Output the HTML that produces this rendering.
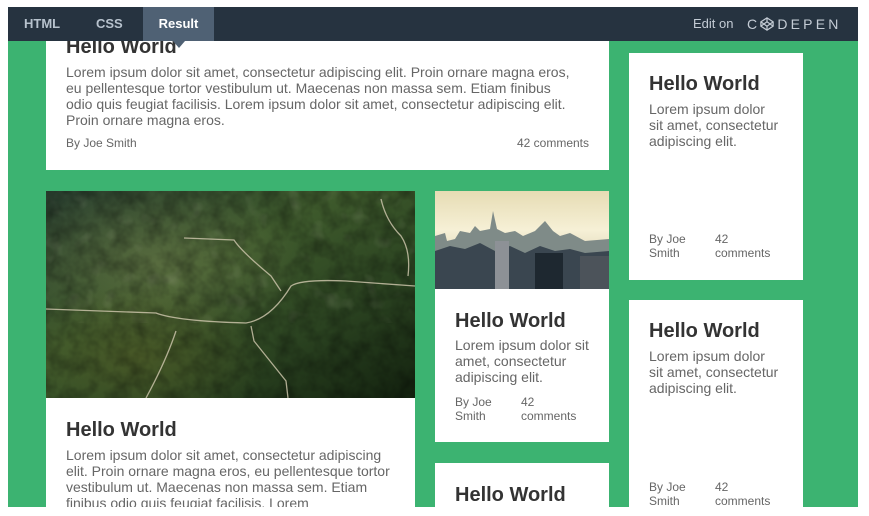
<!DOCTYPE html>
<html><head><meta charset="utf-8"><style>
*{margin:0;padding:0;box-sizing:border-box}
body{width:869px;height:516px;background:#fff;position:relative;overflow:hidden;font-family:"Liberation Sans",Arial,sans-serif}
.green{position:absolute;left:8px;top:7px;width:850px;height:500px;background:#3cb371;overflow:hidden}
.bar{position:absolute;left:8px;top:7px;width:850px;height:34px;background:#263340;z-index:5}
.tab{position:absolute;top:0;height:34px;line-height:33px;color:#b7c2cd;font-size:13px;font-weight:bold}
.card{position:absolute;background:#fff;overflow:hidden}
.t{position:absolute;font-size:20px;font-weight:bold;color:#333;white-space:nowrap}
.p{position:absolute;font-size:14px;line-height:16px;color:#666}
.s{position:absolute;font-size:12px;line-height:14px;color:#666}
</style></head><body>
<div class="green">
 <div class="card" style="left:38px;top:0;width:563px;height:163px">
  <div class="t" style="left:20px;top:29px">Hello World</div>
  <div class="p" style="left:20px;top:57px;width:508px">Lorem ipsum dolor sit amet, consectetur adipiscing elit. Proin ornare magna eros, eu pellentesque tortor vestibulum ut. Maecenas non massa sem. Etiam finibus odio quis feugiat facilisis. Lorem ipsum dolor sit amet, consectetur adipiscing elit. Proin ornare magna eros.</div>
  <div class="s" style="left:20px;top:129px">By Joe Smith</div>
  <div class="s" style="right:20px;top:129px">42 comments</div>
 </div>
 <div class="card" style="left:621px;top:46px;width:174px;height:227px">
  <div class="t" style="left:20px;top:20px">Hello World</div>
  <div class="p" style="left:20px;top:48px;width:132px">Lorem ipsum dolor sit amet, consectetur adipiscing elit.</div>
  <div class="s" style="left:20px;top:179px">By Joe<br>Smith</div>
  <div class="s" style="left:86px;top:179px">42<br>comments</div>
 </div>
 <div class="card" style="left:38px;top:184px;width:369px;height:330px">
  <svg width="369" height="207" style="position:absolute;left:0;top:0" viewBox="0 0 369 207">
   <defs><linearGradient id="g1" x1="0" y1="0" x2="1" y2="1"><stop offset="0" stop-color="#2a3f30"/><stop offset=".4" stop-color="#3e5a2c"/><stop offset=".7" stop-color="#2a4220"/><stop offset="1" stop-color="#13220f"/></linearGradient>
   <radialGradient id="g2" cx=".3" cy=".35" r=".4"><stop offset="0" stop-color="#6b7a4a" stop-opacity=".6"/><stop offset="1" stop-color="#6b7a4a" stop-opacity="0"/></radialGradient>
   <radialGradient id="g3" cx=".25" cy=".8" r=".35"><stop offset="0" stop-color="#4e5a26" stop-opacity=".7"/><stop offset="1" stop-color="#4e5a26" stop-opacity="0"/></radialGradient>
   <filter id="n"><feTurbulence type="fractalNoise" baseFrequency=".06" numOctaves="3" seed="3"/><feColorMatrix values="0 0 0 0 0  0 0 0 0 0  0 0 0 0 0  0 0 0 .6 -.2"/></filter>
   <filter id="n2"><feTurbulence type="fractalNoise" baseFrequency=".05" numOctaves="2" seed="8"/><feColorMatrix values="0 0 0 0 .6  0 0 0 0 .6  0 0 0 0 .45  0 0 0 .5 -.3"/></filter></defs>
   <rect width="369" height="207" fill="url(#g1)"/>
   <rect width="369" height="207" fill="url(#g2)"/>
   <rect width="369" height="207" fill="url(#g3)"/>
   <rect width="369" height="207" filter="url(#n)"/>
   <rect width="369" height="120" filter="url(#n2)"/>
   <g fill="none" stroke="#c9c2a8" stroke-width="1.3" opacity=".85">
    <path d="M0 118 L110 122 Q130 130 200 132 Q225 128 245 95 Q255 88 300 90 L369 95"/>
    <path d="M138 47 L188 49 Q195 60 225 85 L235 100"/>
    <path d="M205 135 L208 150 Q220 165 240 190 L242 207"/>
    <path d="M335 8 Q340 30 355 45 Q365 60 362 85"/>
    <path d="M130 140 Q120 170 100 207"/>
   </g>
  </svg>
  <div class="t" style="left:20px;top:228px">Hello World</div>
  <div class="p" style="left:20px;top:256px;width:328px">Lorem ipsum dolor sit amet, consectetur adipiscing elit. Proin ornare magna eros, eu pellentesque tortor vestibulum ut. Maecenas non massa sem. Etiam finibus odio quis feugiat facilisis. Lorem</div>
 </div>
 <div class="card" style="left:427px;top:184px;width:174px;height:251px">
  <svg width="174" height="98" style="position:absolute;left:0;top:0" viewBox="0 0 174 98">
   <defs><linearGradient id="sk" x1="0" y1="0" x2="0" y2="1"><stop offset="0" stop-color="#e6dcb4"/><stop offset=".4" stop-color="#f6f0d6"/><stop offset="1" stop-color="#c9bfa0"/></linearGradient></defs>
   <rect width="174" height="98" fill="url(#sk)"/>
   <path d="M0 45 L10 42 L12 50 L20 48 L25 40 L35 42 L40 35 L45 40 L55 38 L58 20 L62 38 L70 42 L80 40 L88 45 L100 40 L110 30 L118 40 L125 45 L135 42 L150 50 L174 48 L174 98 L0 98Z" fill="#7f8b88"/>
   <path d="M0 60 L15 55 L30 58 L45 52 L60 60 L75 55 L90 62 L105 55 L120 60 L135 58 L150 62 L174 60 L174 98 L0 98Z" fill="#3a4650"/>
   <rect x="100" y="62" width="28" height="36" fill="#1e2830"/>
   <rect x="145" y="65" width="29" height="33" fill="#4c535a"/>
   <rect x="60" y="50" width="14" height="48" fill="#8d9196"/>
  </svg>
  <div class="t" style="left:20px;top:119px">Hello World</div>
  <div class="p" style="left:20px;top:146px;width:145px">Lorem ipsum dolor sit amet, consectetur adipiscing elit.</div>
  <div class="s" style="left:20px;top:204px">By Joe<br>Smith</div>
  <div class="s" style="left:86px;top:204px">42<br>comments</div>
 </div>
 <div class="card" style="left:427px;top:456px;width:174px;height:60px">
  <div class="t" style="left:20px;top:21px">Hello World</div>
 </div>
 <div class="card" style="left:621px;top:293px;width:174px;height:220px">
  <div class="t" style="left:20px;top:20px">Hello World</div>
  <div class="p" style="left:20px;top:48px;width:132px">Lorem ipsum dolor sit amet, consectetur adipiscing elit.</div>
  <div class="s" style="left:20px;top:180px">By Joe<br>Smith</div>
  <div class="s" style="left:86px;top:180px">42<br>comments</div>
 </div>
</div>
<div class="bar">
 <div class="tab" style="left:16px">HTML</div>
 <div class="tab" style="left:88px">CSS</div>
 <div class="tab" style="left:135px;width:71px;background:#4f6174;color:#fff;text-align:center">Result</div>
 <div style="position:absolute;left:165px;top:34px;width:0;height:0;border-left:6px solid transparent;border-right:6px solid transparent;border-top:7px solid #4f6174"></div>
 <div class="tab" style="left:685px;font-weight:normal;color:#c4ccd5">Edit on</div>
 <div style="position:absolute;left:739px;top:8px;color:#c4ccd5;font-size:14px;letter-spacing:3.2px;line-height:18px;white-space:nowrap">C<svg width="14" height="14" viewBox="0 0 16 16" style="vertical-align:-2px;margin:0 3px 0 0"><g fill="none" stroke="#c4ccd5" stroke-width="1.4"><path d="M8 1 L15 5.5 L15 10.5 L8 15 L1 10.5 L1 5.5Z"/><path d="M8 1 V5.5 M8 10.5 V15 M1 5.5 L8 10.5 L15 5.5 M1 10.5 L8 5.5 L15 10.5"/></g></svg>DEPEN</div>
</div>
</body></html>
